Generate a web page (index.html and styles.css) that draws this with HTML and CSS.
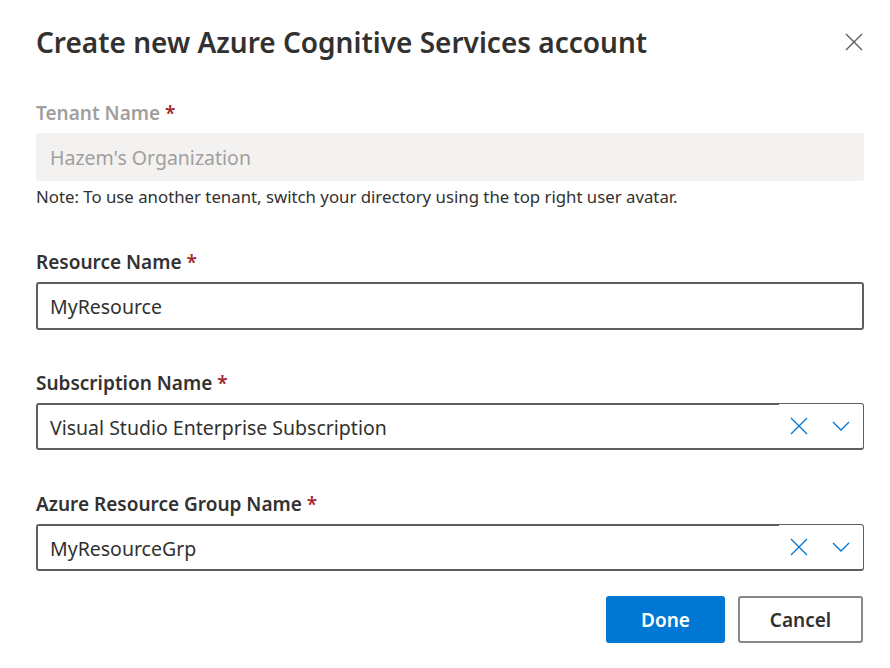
FILE: index.html
```html
<!DOCTYPE html>
<html lang="en">
<head>
<meta charset="utf-8">
<title>Create new Azure Cognitive Services account</title>
<link rel="stylesheet" href="styles.css">
</head>
<body>
<div class="dialog">
  <div class="header">
    <h1 class="title">Create new Azure Cognitive Services account</h1>
    <button class="close" aria-label="Close">
      <svg width="18" height="18" viewBox="0 0 18 18"><path d="M1 1 L17 17 M17 1 L1 17" stroke="#605e5c" stroke-width="1.4" fill="none"/></svg>
    </button>
  </div>

  <div class="field field-first">
    <label class="label label-disabled">Tenant Name <span class="req">*</span></label>
    <div class="input input-disabled">Hazem's Organization</div>
    <div class="note">Note: To use another tenant, switch your directory using the top right user avatar.</div>
  </div>

  <div class="field">
    <label class="label">Resource Name <span class="req">*</span></label>
    <div class="input">MyResource</div>
  </div>

  <div class="field">
    <label class="label">Subscription Name <span class="req">*</span></label>
    <div class="combo">
      <div class="combo-text">Visual Studio Enterprise Subscription</div>
      <div class="combo-icons">
        <svg class="ico-x" width="18" height="18" viewBox="0 0 18 18"><path d="M1 1 L17 17 M17 1 L1 17" stroke="#0078d4" stroke-width="1.3" fill="none"/></svg>
        <svg class="ico-chev" width="18" height="10" viewBox="0 0 18 10"><path d="M1 1 L9 9 L17 1" stroke="#0078d4" stroke-width="1.3" fill="none"/></svg>
      </div>
    </div>
  </div>

  <div class="field field-last">
    <label class="label">Azure Resource Group Name <span class="req">*</span></label>
    <div class="combo">
      <div class="combo-text">MyResourceGrp</div>
      <div class="combo-icons">
        <svg class="ico-x" width="18" height="18" viewBox="0 0 18 18"><path d="M1 1 L17 17 M17 1 L1 17" stroke="#0078d4" stroke-width="1.3" fill="none"/></svg>
        <svg class="ico-chev" width="18" height="10" viewBox="0 0 18 10"><path d="M1 1 L9 9 L17 1" stroke="#0078d4" stroke-width="1.3" fill="none"/></svg>
      </div>
    </div>
  </div>

  <div class="footer">
    <button class="btn btn-primary">Done</button>
    <button class="btn btn-default">Cancel</button>
  </div>
</div>
</body>
</html>
```

FILE: styles.css
```css
* { box-sizing: border-box; }
html, body {
  margin: 0;
  padding: 0;
  background: #ffffff;
}
body {
  font-family: "Noto Sans", "Open Sans", sans-serif;
  color: #323130;
}
.dialog {
  padding: 22px 26px 0 36px;
}
.header {
  display: flex;
  align-items: center;
  justify-content: space-between;
}
.title {
  margin: 0;
  font-size: 28px;
  line-height: 40px;
  font-weight: 600;
  color: #323130;
}
.close {
  border: 0;
  background: transparent;
  padding: 0;
  margin-right: 1px;
  width: 18px;
  height: 18px;
  display: flex;
}
.field {
  display: flex;
  flex-direction: column;
  margin-top: 39px;
}
.field-first {
  margin-top: 37px;
}
.field-last {
  margin-top: 40px;
}
.label {
  font-size: 19px;
  line-height: 28px;
  font-weight: 600;
  color: #323130;
  margin-bottom: 6px;
}
.label-disabled {
  color: #a19f9d;
}
.req {
  color: #a4262c;
}
.input {
  height: 48px;
  border: 2px solid #605e5c;
  border-radius: 3px;
  padding: 1px 12px 0;
  font-size: 19.5px;
  display: flex;
  align-items: center;
  color: #323130;
}
.input-disabled {
  border: 0;
  background: #f3f2f1;
  color: #a19f9d;
  padding: 1px 14px 0;
}
.note {
  margin-top: 4px;
  font-size: 16.8px;
  line-height: 24px;
  color: #323130;
}
.combo {
  height: 47px;
  display: flex;
  border-style: solid;
  border-color: #605e5c;
  border-width: 1px 1px 2px 2px;
  border-radius: 3px;
}
.combo-text {
  flex: 1;
  display: flex;
  align-items: center;
  padding: 2px 12px 0;
  font-size: 19.5px;
  box-shadow: inset 0 1px 0 #605e5c;
}
.combo-icons {
  display: flex;
  align-items: center;
  padding: 0 13px 0 11px;
  gap: 24px;
}
.footer {
  display: flex;
  justify-content: flex-end;
  gap: 13px;
  margin-top: 25px;
}
.btn {
  height: 47px;
  border-radius: 3px;
  font-family: inherit;
  font-size: 19px;
  font-weight: 600;
  padding: 1px 0 0;
}
.btn-primary {
  width: 119px;
  background: #0078d4;
  border: 0;
  color: #ffffff;
}
.btn-default {
  width: 125px;
  background: #ffffff;
  border: 2px solid #8a8886;
  color: #323130;
  margin-right: 1px;
}
```
